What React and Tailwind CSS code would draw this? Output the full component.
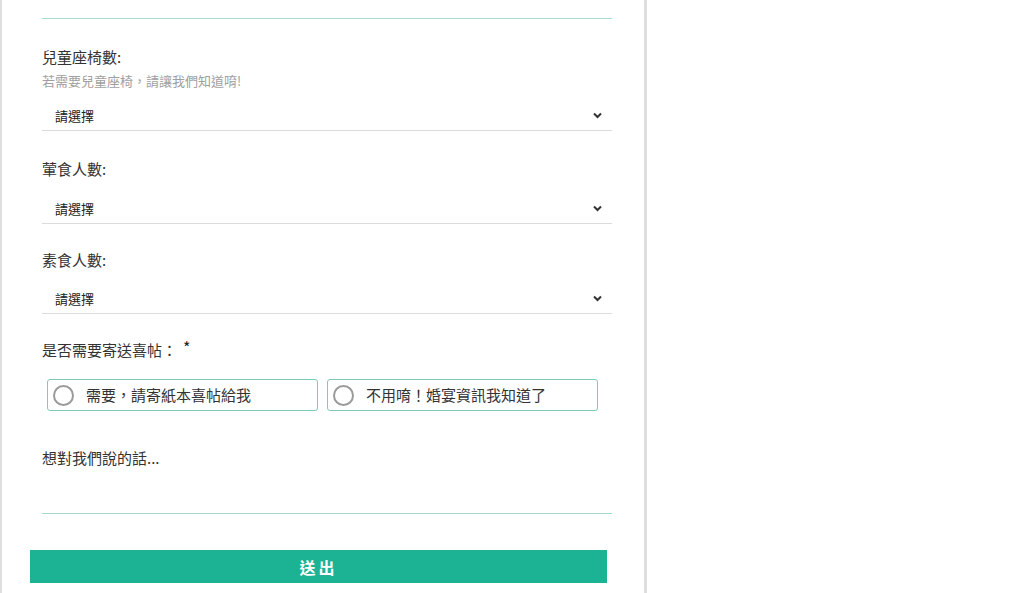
import React from "react";

const font = { fontFamily: '"Noto Sans CJK TC", "Noto Sans", sans-serif' };

function Chevron() {
  return (
    <svg width="9" height="7" viewBox="0 0 9 7" className="mr-[10px]">
      <path d="M1 1.5 L4.5 5 L8 1.5" fill="none" stroke="#333" strokeWidth="2" />
    </svg>
  );
}

function Select({ className = "" }) {
  return (
    <div className={"h-[30px] border-b border-[#dcdcdc] flex items-center justify-between " + className}>
      <span className="ml-[13px] text-[13px] leading-[18px] text-[#222]">請選擇</span>
      <Chevron />
    </div>
  );
}

function Radio({ label }) {
  return (
    <div className="w-[271px] h-[32px] border border-[#7fcab5] rounded-[3px] flex items-center">
      <span className="ml-[5px] w-[21px] h-[21px] rounded-full border-2 border-[#9a9a9a] bg-white" />
      <span className="ml-[12px] text-[15px] leading-[20px] text-[#333]">{label}</span>
    </div>
  );
}

export default function App() {
  return (
    <div className="w-full min-h-screen bg-white" style={font}>
      <div className="w-[647px] h-[593px] border-l-2 border-r-[3px] border-[#dedede] bg-white overflow-hidden">
        <div className="ml-[40px] w-[570px]">
          <div className="mt-[18px] h-px bg-[#a9dccf]" />

          <div className="mt-[28px] text-[15px] leading-[20px] text-[#333]">兒童座椅數:</div>
          <div className="mt-[5px] text-[13px] leading-[18px] text-[#a0a0a0]">若需要兒童座椅，請讓我們知道唷!</div>
          <Select className="mt-[11px]" />

          <div className="mt-[28px] text-[15px] leading-[20px] text-[#333]">葷食人數:</div>
          <Select className="mt-[15px]" />

          <div className="mt-[26px] text-[15px] leading-[20px] text-[#333]">素食人數:</div>
          <Select className="mt-[14px]" />

          <div className="mt-[26px] text-[15px] leading-[20px] text-[#333] flex">
            <span>是否需要寄送喜帖：</span>
            <span className="ml-[6px] text-[16px] leading-[14px] text-[#222]">*</span>
          </div>
          <div className="mt-[19px] ml-[5px] flex gap-[9px]">
            <Radio label="需要，請寄紙本喜帖給我" />
            <Radio label="不用唷！婚宴資訊我知道了" />
          </div>

          <div className="mt-[37px] h-[66px] border-b border-[#a3d9cb] text-[15px] leading-[20px] text-[#333]">
            想對我們說的話...
          </div>

          <button className="mt-[36px] -ml-[12px] w-[577px] h-[33px] bg-[#1bb394] text-white text-[16px] font-bold tracking-[3px] flex items-center justify-center">
            送出
          </button>
        </div>
      </div>
    </div>
  );
}
